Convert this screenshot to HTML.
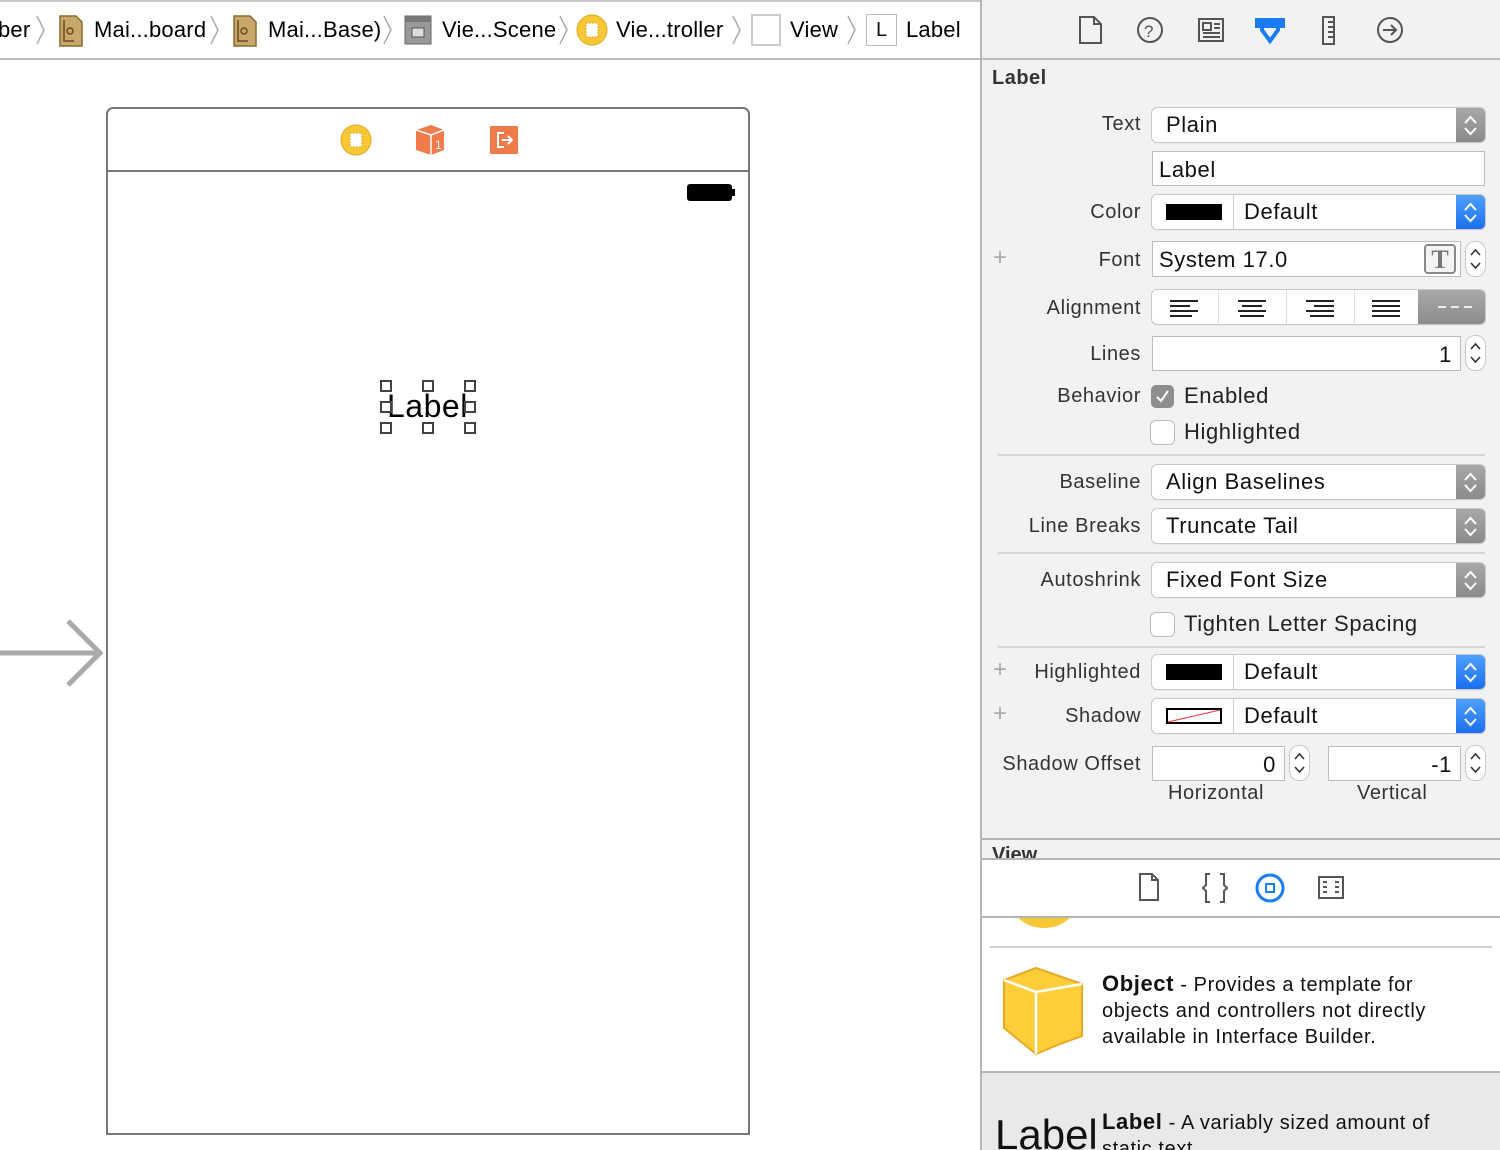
<!DOCTYPE html>
<html><head><meta charset="utf-8"><style>
*{box-sizing:border-box;margin:0;padding:0}
body{width:1500px;height:1150px;overflow:hidden;background:#fff;font-family:"Liberation Sans",sans-serif;position:relative;color:#111}
.a{position:absolute}
.crumb{font-size:22px;top:17px;color:#000;white-space:nowrap;letter-spacing:0.2px}
.chev{position:absolute;top:14px;width:10px;height:32px}
.lbl{position:absolute;right:359px;font-size:20px;color:#333;text-align:right;white-space:nowrap;letter-spacing:0.6px}
.pop{position:absolute;left:1152px;width:333px;height:34px;background:#fff;border-radius:5px;box-shadow:0 0 0 1px #c8c8c8,0 1px 1px #bbb;font-size:22px;color:#111;letter-spacing:0.6px}
.pop .t{position:absolute;left:14px;top:4px}
.st{position:absolute;right:0;top:0;width:29px;height:34px;border-radius:0 5px 5px 0;background:linear-gradient(#a8a8a8,#8a8a8a)}
.st.b{background:linear-gradient(#4ea0ff,#1a6ff0)}
.st svg,.sp svg{position:absolute;left:0;top:0}
.fld{position:absolute;background:#fff;border:1px solid #bdbdbd;font-size:22px;letter-spacing:0.6px}
.sp{position:absolute;width:19px;height:34px;background:#fff;border-radius:9px;box-shadow:0 0 0 1px #c8c8c8}
.cb{position:absolute;left:1151px;width:23px;height:23px;border-radius:5px;background:#fff;box-shadow:0 0 0 1px #bbb}
.sep{position:absolute;left:998px;width:487px;height:2px;background:#d6d6d6}
.plus{position:absolute;left:993px;font-size:24px;color:#aaa;font-weight:300}
.sw{position:absolute;left:14px;top:9px;width:56px;height:16px;background:#000}
.dv{position:absolute;left:81px;top:0;width:1px;height:34px;background:#ccc}
.hd{position:absolute;width:12px;height:12px;border:2px solid #444;background:#fff}
.ck{font-size:22px;color:#222;letter-spacing:0.6px}
</style></head><body>
<!-- breadcrumb -->
<div class="a" style="left:0;top:0;width:981px;height:2px;background:#c8c8c8"></div>
<div class="a" style="left:0;top:58px;width:981px;height:2px;background:#bdbdbd"></div>
<div class="a crumb" style="left:-2px">ber</div>
<svg class="chev" style="left:36px" viewBox="0 0 10 32"><path d="M1 2L8 16L1 30" fill="none" stroke="#aaa" stroke-width="1.5"/></svg>
<svg class="a" style="left:58px;top:15px" width="26" height="32" viewBox="0 0 26 32"><path d="M2 1H18L24 7V31H2Z" fill="#c8a86a" stroke="#8a6a30" stroke-width="1.5"/><circle cx="12" cy="16" r="3" fill="none" stroke="#6a4a20" stroke-width="1.5"/><path d="M6 5V26H16" fill="none" stroke="#6a4a20" stroke-width="1.5"/></svg>
<div class="a crumb" style="left:94px">Mai...board</div>
<svg class="chev" style="left:210px" viewBox="0 0 10 32"><path d="M1 2L8 16L1 30" fill="none" stroke="#aaa" stroke-width="1.5"/></svg>
<svg class="a" style="left:232px;top:15px" width="26" height="32" viewBox="0 0 26 32"><path d="M2 1H18L24 7V31H2Z" fill="#c8a86a" stroke="#8a6a30" stroke-width="1.5"/><circle cx="12" cy="16" r="3" fill="none" stroke="#6a4a20" stroke-width="1.5"/><path d="M6 5V26H16" fill="none" stroke="#6a4a20" stroke-width="1.5"/></svg>
<div class="a crumb" style="left:268px">Mai...Base)</div>
<svg class="chev" style="left:383px" viewBox="0 0 10 32"><path d="M1 2L8 16L1 30" fill="none" stroke="#aaa" stroke-width="1.5"/></svg>
<svg class="a" style="left:404px;top:15px" width="28" height="30" viewBox="0 0 28 30"><rect x="1" y="1" width="26" height="28" fill="#999" stroke="#666"/><rect x="1" y="1" width="26" height="6" fill="#777"/><rect x="8" y="13" width="12" height="9" fill="#ddd" stroke="#555"/></svg>
<div class="a crumb" style="left:442px">Vie...Scene</div>
<svg class="chev" style="left:559px" viewBox="0 0 10 32"><path d="M1 2L8 16L1 30" fill="none" stroke="#aaa" stroke-width="1.5"/></svg>
<svg class="a" style="left:576px;top:14px" width="32" height="32" viewBox="0 0 32 32"><circle cx="16" cy="16" r="15" fill="#f7c735" stroke="#e0a820"/><rect x="10" y="9" width="12" height="14" fill="#fff" stroke="#e0a820" stroke-dasharray="2 1"/></svg>
<div class="a crumb" style="left:616px">Vie...troller</div>
<svg class="chev" style="left:732px" viewBox="0 0 10 32"><path d="M1 2L8 16L1 30" fill="none" stroke="#aaa" stroke-width="1.5"/></svg>
<div class="a" style="left:751px;top:14px;width:30px;height:32px;border:2px solid #ccc;background:#fff"></div>
<div class="a crumb" style="left:790px">View</div>
<svg class="chev" style="left:847px" viewBox="0 0 10 32"><path d="M1 2L8 16L1 30" fill="none" stroke="#aaa" stroke-width="1.5"/></svg>
<div class="a" style="left:866px;top:14px;width:31px;height:32px;border:1px solid #bbb;background:#fff;font-size:20px;text-align:center;line-height:30px">L</div>
<div class="a crumb" style="left:906px">Label</div>

<!-- phone -->
<div class="a" style="left:106px;top:107px;width:644px;height:1028px;border:2px solid #777;border-radius:7px 7px 0 0;background:#fff"></div>
<div class="a" style="left:106px;top:170px;width:644px;height:2px;background:#777"></div>
<svg class="a" style="left:340px;top:124px" width="32" height="32" viewBox="0 0 32 32"><circle cx="16" cy="16" r="15" fill="#f7c735" stroke="#e0a820"/><rect x="10" y="9" width="12" height="14" fill="#fff" stroke="#e0a820" stroke-dasharray="2 1"/></svg>
<svg class="a" style="left:415px;top:124px" width="30" height="32" viewBox="0 0 30 32"><path d="M1 6L16 1L29 6V26L16 31L1 26Z" fill="#f07a4a"/><path d="M1 6L16 11L29 6M16 11V31" stroke="#fff" stroke-width="1.5" fill="none"/><text x="20" y="25" font-size="12" fill="#fff" font-family="Liberation Sans">1</text></svg>
<svg class="a" style="left:490px;top:126px" width="28" height="28" viewBox="0 0 28 28"><rect width="28" height="28" fill="#f07a4a"/><path d="M14 7H8V21H14M12 14H21M18 10L22 14L18 18" stroke="#fff" stroke-width="2" fill="none"/></svg>
<div class="a" style="left:687px;top:184px;width:45px;height:17px;background:#000;border-radius:3px"></div>
<div class="a" style="left:732px;top:189px;width:3px;height:7px;background:#000"></div>
<div class="a" style="left:387px;top:388px;font-size:32px;color:#000;letter-spacing:0.5px">Label</div>
<div class="hd" style="left:380px;top:380px"></div><div class="hd" style="left:422px;top:380px"></div><div class="hd" style="left:464px;top:380px"></div>
<div class="hd" style="left:380px;top:401px"></div><div class="hd" style="left:464px;top:401px"></div>
<div class="hd" style="left:380px;top:422px"></div><div class="hd" style="left:422px;top:422px"></div><div class="hd" style="left:464px;top:422px"></div>
<svg class="a" style="left:0;top:615px" width="108" height="76"><path d="M0 38H100M68 6L100 38L68 70" stroke="#aaa" stroke-width="5" fill="none"/></svg>

<!-- right panel -->
<div class="a" style="left:980px;top:0;width:520px;height:1150px;background:#f2f2f2;border-left:2px solid #b5b5b5"></div>
<div class="a" style="left:982px;top:58px;width:518px;height:2px;background:#bdbdbd"></div>
<svg class="a" style="left:1075px;top:14px" width="330" height="34" viewBox="0 0 330 34">
<g fill="none" stroke="#555" stroke-width="2">
<path d="M5 3H19L26 10V29H5Z"/><path d="M19 3V10H26"/>
<circle cx="75" cy="16" r="12"/>
<rect x="124" y="5" width="24" height="22"/><rect x="128" y="9" width="8" height="7"/><path d="M139 10H145M139 14H145M128 19H145M128 23H145"/>
<rect x="248" y="3" width="11" height="27"/><path d="M253 8H259M253 13H259M253 18H259M253 23H259"/>
<circle cx="315" cy="16" r="12"/><path d="M308 16H321M316 11L321 16L316 21"/>
</g>
<text x="69" y="23" font-size="17" fill="#555" font-family="Liberation Sans">?</text>
<rect x="180" y="4" width="30" height="10" fill="#1a7cf5"/>
<path d="M187 6H203V16L195 27L187 16Z" fill="none" stroke="#1a7cf5" stroke-width="4" stroke-linejoin="miter"/>
</svg>
<div class="a" style="left:992px;top:67px;font-size:20px;font-weight:bold;color:#333;letter-spacing:0.5px">Label</div>

<div class="lbl" style="top:113px">Text</div>
<div class="pop" style="top:108px"><span class="t">Plain</span><div class="st"><svg width="29" height="34"><path d="M9 15L14.5 9L20 15M9 20L14.5 26L20 20" stroke="#fff" stroke-width="2" fill="none"/></svg></div></div>
<div class="fld" style="left:1152px;top:151px;width:333px;height:35px;padding:5px 6px">Label</div>

<div class="lbl" style="top:201px">Color</div>
<div class="pop" style="top:195px"><div class="sw"></div><div class="dv"></div><span class="t" style="left:92px">Default</span><div class="st b"><svg width="29" height="34"><path d="M9 15L14.5 9L20 15M9 20L14.5 26L20 20" stroke="#fff" stroke-width="2" fill="none"/></svg></div></div>

<div class="plus" style="top:244px">+</div>
<div class="lbl" style="top:249px">Font</div>
<div class="fld" style="left:1152px;top:241px;width:309px;height:36px;padding:5px 6px">System 17.0</div>
<div class="a" style="left:1424px;top:244px;width:32px;height:30px;border:2px solid #888;border-radius:4px;background:#f4f4f4;font-family:'Liberation Serif',serif;font-size:26px;font-weight:bold;color:#777;text-align:center;line-height:28px">T</div>
<div class="sp" style="left:1466px;top:242px"><svg width="19" height="34"><path d="M5 13L9.5 8L14 13M5 21L9.5 26L14 21" stroke="#333" stroke-width="1.6" fill="none"/></svg></div>

<div class="lbl" style="top:297px">Alignment</div>
<div class="a" style="left:1152px;top:290px;width:333px;height:34px;background:#fff;border-radius:5px;box-shadow:0 0 0 1px #c8c8c8,0 1px 1px #bbb;overflow:hidden">
<div class="a" style="left:66px;top:0;width:1px;height:34px;background:#ddd"></div><div class="a" style="left:134px;top:0;width:1px;height:34px;background:#ddd"></div><div class="a" style="left:202px;top:0;width:1px;height:34px;background:#ddd"></div>
<div class="a" style="left:266px;top:0;width:67px;height:34px;background:linear-gradient(#a8a8a8,#8c8c8c)"></div>
<svg class="a" style="left:0;top:0" width="333" height="34"><g stroke="#222" stroke-width="2"><path d="M18 11H46M18 16H38M18 21H46M18 26H40"/><path d="M86 11H114M90 16H110M86 21H114M88 26H112"/><path d="M154 11H182M162 16H182M154 21H182M158 26H182"/><path d="M220 11H248M220 16H248M220 21H248M220 26H248"/></g><path d="M286 17H294M299 17H307M312 17H320" stroke="#eee" stroke-width="2"/></svg>
</div>

<div class="lbl" style="top:343px">Lines</div>
<div class="fld" style="left:1152px;top:336px;width:309px;height:35px;padding:5px 8px;text-align:right">1</div>
<div class="sp" style="left:1466px;top:336px"><svg width="19" height="34"><path d="M5 13L9.5 8L14 13M5 21L9.5 26L14 21" stroke="#333" stroke-width="1.6" fill="none"/></svg></div>

<div class="lbl" style="top:385px">Behavior</div>
<div class="cb" style="top:385px;background:#8e8e8e;box-shadow:none"><svg width="23" height="23"><path d="M6 12L10 16L17 6" stroke="#fff" stroke-width="2" fill="none"/></svg></div>
<div class="a ck" style="left:1184px;top:383px">Enabled</div>
<div class="cb" style="top:421px"></div>
<div class="a ck" style="left:1184px;top:419px">Highlighted</div>
<div class="sep" style="top:454px"></div>

<div class="lbl" style="top:471px">Baseline</div>
<div class="pop" style="top:465px"><span class="t">Align Baselines</span><div class="st"><svg width="29" height="34"><path d="M9 15L14.5 9L20 15M9 20L14.5 26L20 20" stroke="#fff" stroke-width="2" fill="none"/></svg></div></div>
<div class="lbl" style="top:515px">Line Breaks</div>
<div class="pop" style="top:509px"><span class="t">Truncate Tail</span><div class="st"><svg width="29" height="34"><path d="M9 15L14.5 9L20 15M9 20L14.5 26L20 20" stroke="#fff" stroke-width="2" fill="none"/></svg></div></div>
<div class="sep" style="top:552px"></div>

<div class="lbl" style="top:569px">Autoshrink</div>
<div class="pop" style="top:563px"><span class="t">Fixed Font Size</span><div class="st"><svg width="29" height="34"><path d="M9 15L14.5 9L20 15M9 20L14.5 26L20 20" stroke="#fff" stroke-width="2" fill="none"/></svg></div></div>
<div class="cb" style="top:613px"></div>
<div class="a ck" style="left:1184px;top:611px">Tighten Letter Spacing</div>
<div class="sep" style="top:646px"></div>

<div class="plus" style="top:656px">+</div>
<div class="lbl" style="top:661px">Highlighted</div>
<div class="pop" style="top:655px"><div class="sw"></div><div class="dv"></div><span class="t" style="left:92px">Default</span><div class="st b"><svg width="29" height="34"><path d="M9 15L14.5 9L20 15M9 20L14.5 26L20 20" stroke="#fff" stroke-width="2" fill="none"/></svg></div></div>
<div class="plus" style="top:700px">+</div>
<div class="lbl" style="top:705px">Shadow</div>
<div class="pop" style="top:699px"><svg class="a" style="left:14px;top:9px" width="56" height="16"><rect x="1" y="1" width="54" height="14" fill="#fff" stroke="#000" stroke-width="2"/><path d="M2 14L54 2" stroke="#e33" stroke-width="1"/></svg><div class="dv"></div><span class="t" style="left:92px">Default</span><div class="st b"><svg width="29" height="34"><path d="M9 15L14.5 9L20 15M9 20L14.5 26L20 20" stroke="#fff" stroke-width="2" fill="none"/></svg></div></div>

<div class="lbl" style="top:753px">Shadow Offset</div>
<div class="fld" style="left:1152px;top:746px;width:133px;height:35px;padding:5px 8px;text-align:right">0</div>
<div class="sp" style="left:1290px;top:746px"><svg width="19" height="34"><path d="M5 13L9.5 8L14 13M5 21L9.5 26L14 21" stroke="#333" stroke-width="1.6" fill="none"/></svg></div>
<div class="fld" style="left:1328px;top:746px;width:133px;height:35px;padding:5px 8px;text-align:right">-1</div>
<div class="sp" style="left:1466px;top:746px"><svg width="19" height="34"><path d="M5 13L9.5 8L14 13M5 21L9.5 26L14 21" stroke="#333" stroke-width="1.6" fill="none"/></svg></div>
<div class="a" style="left:1168px;top:782px;font-size:20px;color:#333;letter-spacing:0.6px">Horizontal</div>
<div class="a" style="left:1357px;top:782px;font-size:20px;color:#333;letter-spacing:0.6px">Vertical</div>

<div class="a" style="left:982px;top:838px;width:518px;height:2px;background:#b5b5b5"></div>
<div class="a" style="left:992px;top:845px;width:60px;height:13px;overflow:hidden;font-size:20px;font-weight:bold;color:#333;line-height:20px">View</div>
<div class="a" style="left:982px;top:858px;width:518px;height:2px;background:#b5b5b5"></div>
<div class="a" style="left:982px;top:860px;width:518px;height:56px;background:#fff"></div>
<svg class="a" style="left:1135px;top:870px" width="215" height="36" viewBox="0 0 215 36"><g fill="none" stroke="#555" stroke-width="2"><path d="M5 4H17L23 10V30H5Z"/><path d="M17 4V10H23"/><path d="M75 4H71V15L68 18L71 21V32H75M85 4H89V15L92 18L89 21V32H85"/><rect x="184" y="7" width="24" height="21"/><path d="M188 12H192M188 17H192M188 22H192M200 12H204M200 17H204M200 22H204"/></g><circle cx="135" cy="18" r="13" fill="none" stroke="#1a7cf5" stroke-width="3"/><rect x="131" y="14" width="8" height="8" fill="none" stroke="#1a7cf5" stroke-width="2"/></svg>
<div class="a" style="left:982px;top:916px;width:518px;height:2px;background:#b5b5b5"></div>
<div class="a" style="left:982px;top:918px;width:518px;height:154px;background:#fff;overflow:hidden"><div class="a" style="left:30px;top:-40px;width:64px;height:50px;border-radius:50%;background:#f7c735"></div></div>
<div class="a" style="left:990px;top:946px;width:502px;height:2px;background:#cfcfcf"></div>
<svg class="a" style="left:1002px;top:964px" width="84" height="92" viewBox="0 0 84 92"><path d="M2 16L34 4L80 20L80 72L58 80L34 90L2 64Z" fill="#fdcd3a" stroke="#e8a92a" stroke-width="2"/><path d="M2 16L34 28L80 20M34 28V90" stroke="#fff" stroke-width="2.5" fill="none"/></svg>
<div class="a" style="left:1102px;top:971px;font-size:20px;line-height:26px;color:#111;width:345px;letter-spacing:0.6px"><b style="font-size:22px">Object</b> - Provides a template for objects and controllers not directly available in Interface Builder.</div>
<div class="a" style="left:982px;top:1071px;width:518px;height:2px;background:#b5b5b5"></div>
<div class="a" style="left:982px;top:1073px;width:518px;height:77px;background:#e9e9e9;overflow:hidden">
<div class="a" style="left:13px;top:38px;font-size:42px;color:#111">Label</div>
<div class="a" style="left:120px;top:36px;font-size:20px;line-height:26px;width:345px;letter-spacing:0.6px"><b style="font-size:22px">Label</b> - A variably sized amount of static text.</div>
</div>
</body></html>
